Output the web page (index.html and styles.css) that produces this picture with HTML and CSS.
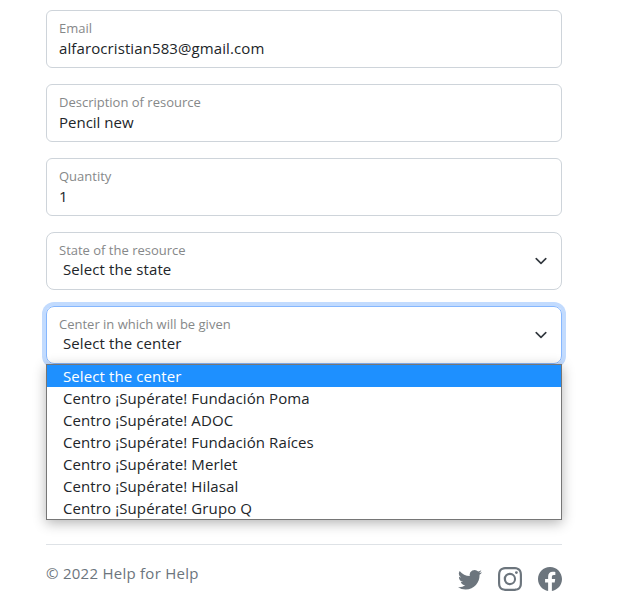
FILE: index.html
```html
<!DOCTYPE html>
<html lang="en">
<head>
<meta charset="utf-8">
<title>Help for Help</title>
<link rel="stylesheet" href="styles.css">
</head>
<body>
<main class="container">
  <form class="form">
    <div class="field"><span class="label">Email</span><span class="value email">alfarocristian583@gmail.com</span></div>
    <div class="field"><span class="label">Description of resource</span><span class="value plain">Pencil new</span></div>
    <div class="field"><span class="label">Quantity</span><span class="value">1</span></div>
    <div class="field select">
      <span class="label">State of the resource</span><span class="value">Select the state</span>
      <svg class="chevron" viewBox="0 0 16 16"><path d="m2 5 6 6 6-6"/></svg>
    </div>
    <div class="field select focused">
      <span class="label">Center in which will be given</span><span class="value">Select the center</span>
      <svg class="chevron" viewBox="0 0 16 16"><path d="m2 5 6 6 6-6"/></svg>
      <ul class="options">
        <li class="active">Select the center</li>
        <li>Centro ¡Supérate! Fundación Poma</li>
        <li>Centro ¡Supérate! ADOC</li>
        <li>Centro ¡Supérate! Fundación Raíces</li>
        <li>Centro ¡Supérate! Merlet</li>
        <li>Centro ¡Supérate! Hilasal</li>
        <li>Centro ¡Supérate! Grupo Q</li>
      </ul>
    </div>
  </form>
  <footer class="footer">
    <span class="copyright">© 2022 Help for Help</span>
    <div class="social">
      <svg class="icon" viewBox="0 0 16 16"><path d="M5.026 15c6.038 0 9.341-5.003 9.341-9.334 0-.14 0-.282-.006-.422A6.685 6.685 0 0 0 16 3.542a6.658 6.658 0 0 1-1.889.518 3.301 3.301 0 0 0 1.447-1.817 6.533 6.533 0 0 1-2.087.793A3.286 3.286 0 0 0 7.875 6.03a9.325 9.325 0 0 1-6.767-3.429 3.289 3.289 0 0 0 1.018 4.382A3.323 3.323 0 0 1 .64 6.575v.045a3.288 3.288 0 0 0 2.632 3.218 3.203 3.203 0 0 1-.865.115 3.23 3.23 0 0 1-.614-.057 3.283 3.283 0 0 0 3.067 2.277A6.588 6.588 0 0 1 .78 13.58a6.32 6.32 0 0 1-.78-.045A9.344 9.344 0 0 0 5.026 15z"/></svg>
      <svg class="icon" viewBox="0 0 16 16"><path d="M8 0C5.829 0 5.556.01 4.703.048 3.85.088 3.269.222 2.76.42a3.917 3.917 0 0 0-1.417.923A3.927 3.927 0 0 0 .42 2.76C.222 3.268.087 3.85.048 4.7.01 5.555 0 5.827 0 8.001c0 2.172.01 2.444.048 3.297.04.852.174 1.433.372 1.942.205.526.478.972.923 1.417.444.445.89.719 1.416.923.51.198 1.09.333 1.942.372C5.555 15.99 5.827 16 8 16s2.444-.01 3.298-.048c.851-.04 1.434-.174 1.943-.372a3.916 3.916 0 0 0 1.416-.923c.445-.445.718-.891.923-1.417.197-.509.332-1.09.372-1.942C15.99 10.445 16 10.173 16 8s-.01-2.445-.048-3.299c-.04-.851-.175-1.433-.372-1.941a3.926 3.926 0 0 0-.923-1.417A3.911 3.911 0 0 0 13.24.42c-.51-.198-1.092-.333-1.943-.372C10.443.01 10.172 0 7.998 0h.003zm-.717 1.442h.718c2.136 0 2.389.007 3.232.046.78.035 1.204.166 1.486.275.373.145.64.319.92.599.28.28.453.546.598.92.11.281.24.705.275 1.485.039.843.047 1.096.047 3.231s-.008 2.389-.047 3.232c-.035.78-.166 1.203-.275 1.485a2.47 2.47 0 0 1-.599.919c-.28.28-.546.453-.92.598-.28.11-.704.24-1.485.276-.843.038-1.096.047-3.232.047s-2.39-.009-3.233-.047c-.78-.036-1.203-.166-1.485-.276a2.478 2.478 0 0 1-.92-.598 2.48 2.48 0 0 1-.6-.92c-.109-.281-.24-.705-.275-1.485-.038-.843-.046-1.096-.046-3.233 0-2.136.008-2.388.046-3.231.036-.78.166-1.204.276-1.486.145-.373.319-.64.599-.92.28-.28.546-.453.92-.598.282-.11.705-.24 1.485-.276.738-.034 1.024-.044 2.515-.045v.002zm4.988 1.328a.96.96 0 1 0 0 1.92.96.96 0 0 0 0-1.92zm-4.27 1.122a4.109 4.109 0 1 0 0 8.217 4.109 4.109 0 0 0 0-8.217zm0 1.441a2.667 2.667 0 1 1 0 5.334 2.667 2.667 0 0 1 0-5.334z"/></svg>
      <svg class="icon" viewBox="0 0 16 16"><path d="M16 8.049c0-4.446-3.582-8.05-8-8.05C3.58 0-.002 3.603-.002 8.05c0 4.017 2.926 7.347 6.75 7.951v-5.625h-2.03V8.05H6.75V6.275c0-2.017 1.195-3.131 3.022-3.131.876 0 1.791.157 1.791.157v1.98h-1.009c-.993 0-1.303.621-1.303 1.258v1.51h2.218l-.354 2.326H9.25V16c3.824-.604 6.75-3.934 6.75-7.951z"/></svg>
    </div>
  </footer>
</main>
</body>
</html>
```
FILE: styles.css
```css
* { box-sizing: border-box; }
body {
  margin: 0;
  background: #fff;
  color: #212529;
  font-family: "Open Sans", "Noto Sans", sans-serif;
  font-size: 15px;
  font-weight: 370;
  letter-spacing: .1px;
}
.container { width: 516px; margin: 10px 0 0 46px; }
.form { display: flex; flex-direction: column; gap: 16px; }
.field {
  position: relative;
  display: flex;
  flex-direction: column;
  height: 58px;
  padding: 8px 12px;
  border: 1px solid #ced4da;
  border-radius: 6px;
  white-space: nowrap;
}
.label { color: #868889; font-size: 13px; line-height: 19px; letter-spacing: 0; }
.value { line-height: 20px; }
.plain { letter-spacing: 0; }
.select { border-radius: 8px; }
.select .value { padding-left: 4px; line-height: 18px; }
.focused { border-color: #86b7fe; box-shadow: 0 0 0 4px #c2dbfe; }
.chevron {
  position: absolute;
  top: 20px;
  right: 12px;
  width: 16px;
  height: 16px;
  fill: none;
  stroke: #343a40;
  stroke-width: 2;
  stroke-linecap: round;
  stroke-linejoin: round;
  transform: scale(.8);
}
.options {
  position: absolute;
  top: 57px;
  left: -1px;
  width: 516px;
  margin: 0;
  padding: 0;
  border: 1px solid #767676;
  background: #fff;
  box-shadow: 0 3px 12px rgba(0, 0, 0, .3);
  list-style: none;
}
.options li { height: 22px; padding-left: 16px; line-height: 22px; }
.options .active { background: #1e90ff; color: #fff; }
.footer {
  display: flex;
  justify-content: space-between;
  margin-top: 180px;
  padding-top: 16px;
  border-top: 1px solid #dee2e6;
  color: #6c757d;
}
.copyright { line-height: 24px; letter-spacing: .26px; }
.social { display: flex; gap: 16px; padding-top: 6px; }
.icon { width: 24px; height: 24px; fill: #6c757d; }
```
